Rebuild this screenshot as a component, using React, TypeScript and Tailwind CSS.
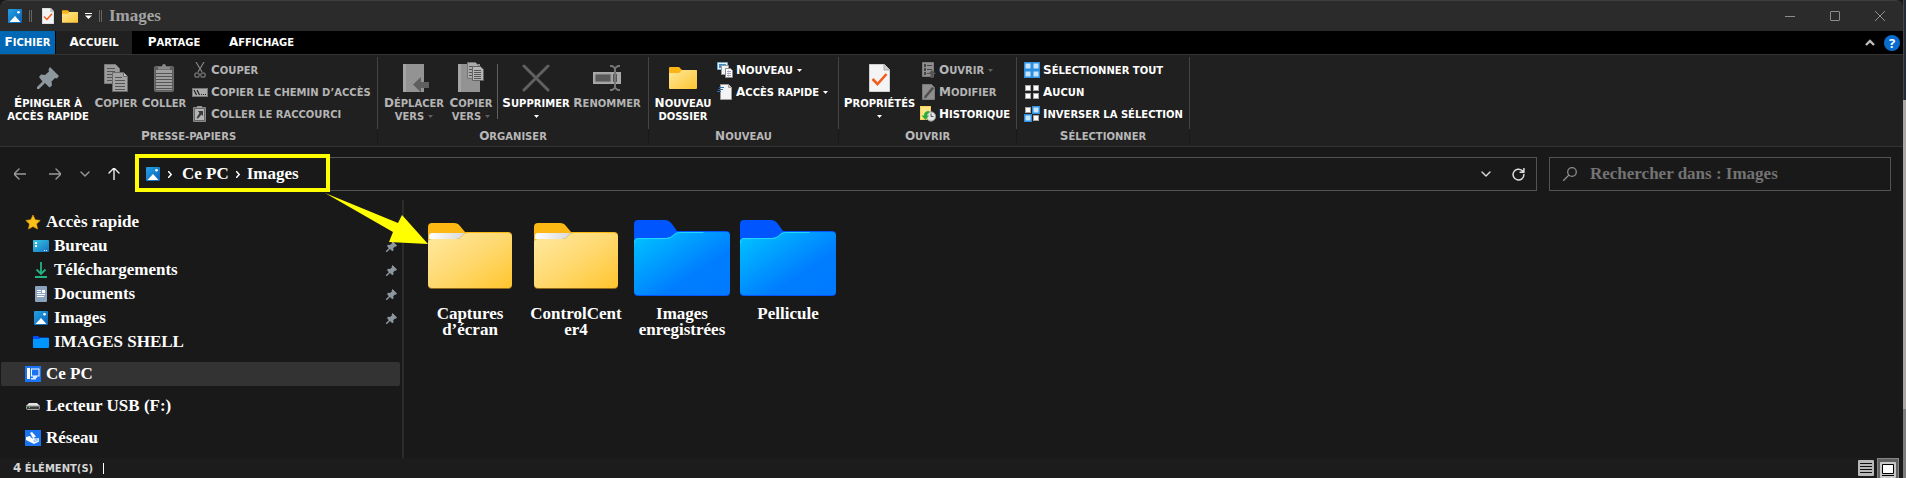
import React from 'react';

const serif = "font-['Liberation_Serif',serif] font-bold text-[17px]";
const caps = "font-['DejaVu_Sans',sans-serif] font-bold text-[10px] uppercase";
const initial = 'block first-letter:text-[12px]';

type IconProps = { className?: string };

const PictureIcon = ({ className = 'size-[14px]' }: IconProps) => (
    <svg viewBox="0 0 14 14" className={className}>
        <defs>
            <linearGradient id="pic" x1="0" y1="0" x2="1" y2="1">
                <stop offset="0" stopColor="#23a3e6" />
                <stop offset="1" stopColor="#0a5fb4" />
            </linearGradient>
        </defs>
        <rect width="14" height="14" rx="1" fill="url(#pic)" />
        <path d="M1.500 13 7 7l5.500 6z" fill="#fff" />
        <circle cx="10.500" cy="3.300" r="1.300" fill="#fff" />
    </svg>
);

const CheckPage = ({ className = 'h-4 w-3' }: IconProps) => (
    <svg viewBox="0 0 21 28" className={className}>
        <path d="M0 0h15l6 6v22H0z" fill="#f4f4f4" stroke="#a8a8a8" />
        <path d="M15 0v6h6" fill="#ccc" stroke="#a8a8a8" />
        <path d="m3.500 15 5 5 9-10" fill="none" stroke="#f25c1c" strokeWidth="2.600" />
    </svg>
);

const SmallFolder = ({ className = 'h-[13px] w-4' }: IconProps) => (
    <svg viewBox="0 0 28 22" className={className}>
        <defs>
            <linearGradient id="sf" x1="0" y1="0" x2="1" y2="1">
                <stop offset="0" stopColor="#ffe79a" />
                <stop offset="1" stopColor="#fdc632" />
            </linearGradient>
        </defs>
        <path d="M0 1q0-1 1-1h9l3 3h14q1 0 1 1v6H0z" fill="#fbb416" />
        <path d="M0 6h10l3-3h14q1 0 1 1v17q0 1-1 1H1q-1 0-1-1z" fill="url(#sf)" />
    </svg>
);

const PinIcon = ({ className = 'size-[11px]' }: IconProps) => (
    <svg viewBox="0 0 22 22" className={className}>
        <path
            d="m13 0 9 9-2 2.500-2-.5-3.500 3.500.5 4-2.500 2-4.500-4.500L2 22H0v-2l5.500-5.500L2 10l2-2.500 4 .5L12 4.500l-.5-2z"
            fill="#8d989e"
        />
    </svg>
);

const Lines = ({ x, y, w, n, gap = 3 }: { x: number; y: number; w: number; n: number; gap?: number }) => (
    <>
        {Array.from({ length: n }, (_, i) => (
            <rect key={i} x={x} y={y + i * gap} width={w} height="1" fill="#555" />
        ))}
    </>
);

const CopyIcon = () => (
    <svg viewBox="0 0 24 28" className="h-7 w-6">
        <path d="M.5.5h11l4 4v15H.5z" fill="#9b9b9b" stroke="#7c7c7c" />
        <Lines x={3} y={4} w={8} n={5} />
        <path d="M8.500 8.500h11l4 4v15h-15z" fill="#a3a3a3" stroke="#6a6a6a" />
        <path d="M19.500 8.500v4h4" fill="#c6c6c6" stroke="#6a6a6a" />
        <Lines x={11} y={13} w={7} n={1} />
        <Lines x={11} y={16} w={10} n={4} />
    </svg>
);

const PasteIcon = () => (
    <svg viewBox="0 0 20 28" className="h-7 w-5">
        <rect x=".5" y="2.500" width="19" height="25" rx="1" fill="#5d5d5d" stroke="#6c6c6c" />
        <path d="M2 6h16v20H2z" fill="#a0a0a0" />
        <Lines x={2} y={9} w={16} n={6} />
        <path d="M4 5.500V3h4q0-3 2-3t2 3h4v2.500z" fill="#898989" />
    </svg>
);

const MoveIcon = () => (
    <svg viewBox="0 0 26 28" className="ml-1 h-7 w-[26px]">
        <path d="M0 0h21v28H0z" fill="#939393" />
        <path d="M0 0h3v28H0z" fill="#a4a4a4" />
        <path d="m10 20.500 8-7.500v5h8v6h-8v4.500z" fill="#5f5f5f" />
    </svg>
);

const CopyToIcon = () => (
    <svg viewBox="0 0 26 30" className="mb-[2px] h-[30px] w-[26px]">
        <path d="M0 2h22v28H0z" fill="#939393" />
        <path d="M0 2h3v28H0z" fill="#a4a4a4" />
        <path d="M9.500.5h8l3 3v13h-11z" fill="#aaa" stroke="#747474" />
        <Lines x={11} y={4} w={6} n={4} />
        <path d="M14.500 4.500h8l3 3v11h-11z" fill="#b5b5b5" stroke="#646464" />
        <Lines x={16} y={8} w={7} n={5} gap={2} />
    </svg>
);

const DeleteIcon = () => (
    <svg viewBox="0 0 28 28" className="size-7">
        <path d="m2 2 24 24M26 2 2 26" stroke="#606060" strokeWidth="3" strokeLinecap="round" />
    </svg>
);

const RenameIcon = () => (
    <svg viewBox="0 0 28 26" className="h-[26px] w-7">
        <path d="M0 7h28v12H0z" fill="#a9a9a9" />
        <path d="M2 9h16v8H2z" fill="#5a5a5a" stroke="#9a9a9a" />
        <path d="M20 9h4v8h-4z" fill="#555" />
        <path d="M17 1h2l3 2 3-2h2M17 25h2l3-2 3 2h2M22 3v20" fill="none" stroke="#767676" strokeWidth="2" />
    </svg>
);

const CutIcon = () => (
    <svg viewBox="0 0 16 16" className="size-4">
        <path d="m4 0 6 10M12 0 6 10" stroke="#858585" strokeWidth="1.200" />
        <circle cx="5" cy="13" r="2.200" fill="none" stroke="#727272" strokeWidth="1.300" />
        <circle cx="11" cy="13" r="2.200" fill="none" stroke="#727272" strokeWidth="1.300" />
    </svg>
);

const PathIcon = () => (
    <svg viewBox="0 0 16 16" className="size-4">
        <rect x=".5" y="4.500" width="15" height="8" fill="#aaa" stroke="#777" />
        <path d="m2 6 2.500 5M5 6l2.500 5" stroke="#222" strokeWidth="1.200" />
        <path d="M9 10h1v1H9zM11 10h1v1h-1zM13 10h1v1h-1z" fill="#222" />
    </svg>
);

const PasteLinkIcon = () => (
    <svg viewBox="0 0 16 16" className="size-4">
        <path d="M1.500 1.500h12v14h-12z" fill="#666" stroke="#8a8a8a" />
        <path d="M3 3h9v11H3z" fill="#b5b5b5" />
        <path d="M5 0h5v2H5z" fill="#999" />
        <path d="M6 5h5v5L9.500 8.500 6 12.500 4.500 12 7.500 7z" fill="#3a3a3a" />
    </svg>
);

const NewItemIcon = () => (
    <svg viewBox="0 0 16 16" className="size-4">
        <path d="M.5.500h10v7H.5z" fill="#e8f3fb" stroke="#6fa7c9" />
        <path d="M2 2h7v4H2z" fill="#3f8fc4" />
        <path d="M4.500 3.500h7v9h-7z" fill="#f2f2f2" stroke="#9a9a9a" />
        <path d="M8.500 6.500h5l2 2v7h-7z" fill="#fff" stroke="#8a8a8a" />
        <path d="M10 9.500h4M10 11.500h4M10 13.500h4" stroke="#8ba6d4" />
        <path d="M11.500 8v7" stroke="#df9a9a" strokeWidth=".5" />
    </svg>
);

const EasyAccessIcon = () => (
    <svg viewBox="0 0 16 16" className="size-4">
        <path d="M3.500.500h8l3 3v12h-11z" fill="#f4f4f4" stroke="#9b9b9b" />
        <path d="M11.500.500v3h3" fill="#ccc" stroke="#9b9b9b" />
        <path d="M2 3.500h5M1 5.500h5M0 7.500h4" stroke="#2b6fb3" />
    </svg>
);

const OpenIcon = () => (
    <svg viewBox="0 0 16 16" className="size-4">
        <path d="M2.500.500h11v14h-11z" fill="#8f8f8f" stroke="#7b7b7b" />
        <path d="M4 2h2v3H4zM4 6h2v3H4zM4 10h2v3H4zM7 3h5v1H7zM7 7h5v1H7zM7 11h3v1H7z" fill="#444" />
        <path d="m12 8 4 4h-2.500v4h-3v-4H8z" fill="#565656" />
    </svg>
);

const EditIcon = () => (
    <svg viewBox="0 0 16 16" className="size-4">
        <path d="M2.500.500h9l3 3v12h-12z" fill="#8f8f8f" stroke="#7b7b7b" />
        <path d="M14.500 4 6 14l-2 .5.500-2.500L12 3z" fill="#505050" />
    </svg>
);

const HistoryIcon = () => (
    <svg viewBox="0 0 16 16" className="size-4">
        <path d="M0 0h11v14H0z" fill="#f7d458" />
        <path d="M1 1h9v12H1z" fill="#fbe38b" />
        <circle cx="11" cy="10.500" r="4.700" fill="#e3e3e3" stroke="#8b8b8b" />
        <path d="M11 7.500v3h2.500" stroke="#555" fill="none" />
        <path d="M9 5Q4 5 4 9.500H1.500L5.500 14l3.500-4.500H7q0-2 2-2.500z" fill="#2faa3d" />
    </svg>
);

const cells = [
    [0, 0],
    [8, 0],
    [0, 8],
    [8, 8]
];

const SelectIcon = ({ on }: { on: number[] }) => (
    <svg viewBox="0 0 16 16" className="size-4">
        {cells.map(([x, y], i) =>
            on.includes(i) ? (
                <g key={i}>
                    <rect x={x} y={y} width="8" height="8" fill="#2e8fe0" />
                    <rect x={x + 1.5} y={y + 1.5} width="5" height="5" fill="#c6e5fb" />
                </g>
            ) : (
                <rect key={i} x={x + 1.5} y={y + 1.5} width="5" height="5" fill="#fff" stroke="#a5a5a5" />
            )
        )}
    </svg>
);

const Caret = ({ className = '' }: IconProps) => (
    <svg viewBox="0 0 5 3" className={`h-[3px] w-[5px] shrink-0 fill-current ${className}`}>
        <path d="M0 0h5L2.500 3z" />
    </svg>
);

type LargeProps = {
    icon: React.ReactNode;
    label: string;
    second?: string;
    caret?: boolean;
    off?: boolean;
    width: string;
};

function LargeButton({ icon, label, second, caret, off, width }: LargeProps) {
    return (
        <button
            disabled={off}
            className={`flex shrink-0 flex-col items-center pt-[5px] leading-[13px] whitespace-nowrap ${caps} ${width} ${off ? 'text-[#b4b4b4]' : 'text-white'}`}
        >
            <span className="mb-[3px] flex h-8 items-center justify-center">{icon}</span>
            <span className={`h-[13px] ${initial}`}>{label}</span>
            <span className="flex h-[13px] items-center gap-1">
                {second}
                {caret && <Caret className={off ? 'text-[#606060]' : ''} />}
            </span>
        </button>
    );
}

function SmallButton({ icon, label, caret, off }: { icon: React.ReactNode; label: string; caret?: boolean; off?: boolean }) {
    return (
        <button
            disabled={off}
            className={`flex h-[22px] items-center gap-[3px] leading-[22px] whitespace-nowrap ${caps} ${off ? 'text-[#b4b4b4]' : 'text-white'}`}
        >
            {icon}
            <span className={initial}>{label}</span>
            {caret && <Caret className={off ? 'ml-px text-[#606060]' : 'ml-px'} />}
        </button>
    );
}

function Group({ title, width, children }: { title: string; width: string; children: React.ReactNode }) {
    return (
        <section className={`flex shrink-0 flex-col ${width}`}>
            <div className="flex h-[72px] border-r border-[#444] pl-[5px]">{children}</div>
            <div className={`h-[15px] border-r border-[#191919] text-center leading-[15px] text-[#b8b8b8] ${caps} ${initial}`}>{title}</div>
        </section>
    );
}

const Column = ({ className = 'pl-[5px]', children }: { className?: string; children: React.ReactNode }) => (
    <div className={`flex flex-col items-start pt-[2px] ${className}`}>{children}</div>
);

function Ribbon() {
    return (
        <div className="flex overflow-hidden border-y border-[#333] bg-[#202020] pt-[2px] pb-[2px]">
            <Group title="Presse-papiers" width="w-[378px]">
                <LargeButton icon={<PinIcon className="size-[22px]" />} label="Épingler à" second="Accès rapide" width="w-[86px]" />
                <LargeButton icon={<CopyIcon />} label="Copier" off width="w-[50px]" />
                <LargeButton icon={<PasteIcon />} label="Coller" off width="w-[46px]" />
                <Column>
                    <SmallButton icon={<CutIcon />} label="Couper" off />
                    <SmallButton icon={<PathIcon />} label="Copier le chemin d’accès" off />
                    <SmallButton icon={<PasteLinkIcon />} label="Coller le raccourci" off />
                </Column>
            </Group>
            <Group title="Organiser" width="w-[271px]">
                <LargeButton icon={<MoveIcon />} label="Déplacer" second="vers" caret off width="w-[62px]" />
                <LargeButton icon={<CopyToIcon />} label="Copier" second="vers" caret off width="w-[52px]" />
                <div className="mt-[7px] h-[55px] w-px bg-[#606060]" />
                <LargeButton icon={<DeleteIcon />} label="Supprimer" caret width="w-[76px]" />
                <LargeButton icon={<RenameIcon />} label="Renommer" off width="w-[66px]" />
            </Group>
            <Group title="Nouveau" width="w-[190px]">
                <LargeButton icon={<SmallFolder className="h-[22px] w-7" />} label="Nouveau" second="dossier" width="w-[58px]" />
                <Column>
                    <SmallButton icon={<NewItemIcon />} label="Nouveau" caret />
                    <SmallButton icon={<EasyAccessIcon />} label="Accès rapide" caret />
                </Column>
            </Group>
            <Group title="Ouvrir" width="w-[178px]">
                <LargeButton icon={<CheckPage className="h-7 w-[21px]" />} label="Propriétés" caret width="w-[71px]" />
                <Column>
                    <SmallButton icon={<OpenIcon />} label="Ouvrir" caret off />
                    <SmallButton icon={<EditIcon />} label="Modifier" off />
                    <SmallButton icon={<HistoryIcon />} label="Historique" />
                </Column>
            </Group>
            <Group title="Sélectionner" width="w-[173px]">
                <Column className="pl-[2px]">
                    <SmallButton icon={<SelectIcon on={[0, 1, 2, 3]} />} label="Sélectionner tout" />
                    <SmallButton icon={<SelectIcon on={[]} />} label="Aucun" />
                    <SmallButton icon={<SelectIcon on={[1, 2]} />} label="Inverser la sélection" />
                </Column>
            </Group>
        </div>
    );
}

function TitleBar() {
    return (
        <header className="flex h-[31px] items-center rounded-t-lg border-t border-[#3d3d3d] bg-[#2b2b2b] pl-2">
            <PictureIcon />
            <span className="ml-[7px] h-3 w-[3px] border-x border-[#666]" />
            <button aria-label="Propriétés" className="ml-[10px]"><CheckPage /></button>
            <button aria-label="Nouveau dossier" className="ml-2"><SmallFolder /></button>
            <button aria-label="Personnaliser" className="ml-[7px]">
                <svg viewBox="0 0 7 6" className="h-[6px] w-[7px]" fill="#fff">
                    <path d="M0 0h7v1H0zM0 2.500h7L3.500 6z" />
                </svg>
            </button>
            <span className="ml-[7px] h-3 w-[3px] border-x border-[#666]" />
            <h1 className={`ml-[7px] leading-5 text-[#a3a3a3] ${serif}`}>Images</h1>
            <div className="ml-auto flex">
                <button aria-label="Réduire" className="flex h-7 w-[45px] items-center justify-center">
                    <span className="h-px w-[10px] bg-[#8c8c8c]" />
                </button>
                <button aria-label="Agrandir" className="flex h-7 w-[45px] items-center justify-center">
                    <span className="size-[10px] rounded-[1px] border border-[#8c8c8c]" />
                </button>
                <button aria-label="Fermer" className="flex h-7 w-[46px] items-center justify-center">
                    <svg viewBox="0 0 10 10" className="size-[10px]" stroke="#8c8c8c"><path d="m0 0 10 10M10 0 0 10" /></svg>
                </button>
            </div>
        </header>
    );
}

function Tabs() {
    return (
        <nav className="flex h-[23px] items-stretch bg-black leading-[23px] text-white">
            <button className={`w-[55px] bg-[#0067b4] ${caps}`}><span className={initial}>Fichier</span></button>
            <button className={`ml-px w-[76px] bg-[#202020] ${caps}`}><span className={initial}>Accueil</span></button>
            <button className={`w-[84px] ${caps}`}><span className={initial}>Partage</span></button>
            <button className={`w-[91px] ${caps}`}><span className={initial}>Affichage</span></button>
            <div className="ml-auto flex items-center gap-[9px] pr-[3px]">
                <button aria-label="Réduire le ruban">
                    <svg viewBox="0 0 10 7" className="h-[7px] w-[10px]" fill="none" stroke="#bdbdbd" strokeWidth="2.400"><path d="m1 6 4-4 4 4" /></svg>
                </button>
                <button aria-label="Aide" className="flex size-4 items-center justify-center rounded-full bg-[#0a6cce] font-['Open_Sans',sans-serif] text-[13px] leading-4 font-bold">
                    ?
                </button>
            </div>
        </nav>
    );
}

const Arrow = ({ d, color, className = 'size-3' }: { d: string; color: string; className?: string }) => (
    <svg viewBox="0 0 12 12" className={className} fill="none" stroke={color} strokeWidth="1.400" strokeLinecap="round" strokeLinejoin="round">
        <path d={d} />
    </svg>
);

const Crumb = () => (
    <svg viewBox="0 0 4 7" className="h-[7px] w-1" fill="none" stroke="#fff" strokeWidth="1.500"><path d="m0 0 3.200 3.500L0 7" /></svg>
);

function AddressRow() {
    return (
        <div className="flex items-center pt-[10px] pr-3 pb-[9px] pl-[14px]">
            <button aria-label="Précédent"><Arrow d="M12 6H0M5 1 0 6l5 5" color="#999" /></button>
            <button aria-label="Suivant" className="ml-[23px]"><Arrow d="M0 6h12M7 1l5 5-5 5" color="#999" /></button>
            <button aria-label="Emplacements récents" className="ml-[18px]"><Arrow d="m2 4 4 4 4-4" color="#999" /></button>
            <button aria-label="Dossier parent" className="ml-[17px]"><Arrow d="M6 12V0M1 5l5-5 5 5" color="#eee" /></button>
            <div className="relative ml-[15px] flex h-[34px] flex-1 items-center border border-[#535353] pl-[10px]">
                <PictureIcon />
                <span className="ml-2"><Crumb /></span>
                <button className={`ml-[10px] text-white ${serif}`}>Ce PC</button>
                <span className="ml-[7px]"><Crumb /></span>
                <button className={`ml-[7px] text-white ${serif}`}>Images</button>
                <button aria-label="Adresses précédentes" className="ml-auto"><Arrow d="m2 4 4 4 4-4" color="#ddd" /></button>
                <button aria-label="Actualiser" className="mr-[11px] ml-5">
                    <Arrow d="M11 6a5 5 0 1 1-1.600-3.600L11 4M11 .500V4H7.500" color="#ddd" className="size-[13px]" />
                </button>
                <div className="pointer-events-none absolute -top-1 -left-px h-[38px] w-[195px] border-4 border-[#ffff00]" />
                <svg viewBox="0 0 103 52" className="pointer-events-none absolute top-[35px] left-[189px] z-10 h-[52px] w-[103px]">
                    <path d="m0 0 73 30 4-8 26 29-39-2 4-10z" fill="#ffff00" />
                </svg>
            </div>
            <label className="ml-3 flex h-[34px] w-[342px] items-center border border-[#535353] pl-[13px]">
                <svg viewBox="0 0 14 14" className="size-[14px]" fill="none" stroke="#8d8d8d" strokeWidth="1.300">
                    <circle cx="9" cy="5" r="4.300" />
                    <path d="m6 8-6 6" />
                </svg>
                <input
                    type="text"
                    aria-label="Rechercher"
                    placeholder="Rechercher dans : Images"
                    className={`ml-[13px] min-w-0 flex-1 bg-transparent outline-none placeholder:text-[#737373] ${serif}`}
                />
            </label>
        </div>
    );
}

const StarIcon = () => (
    <svg viewBox="0 0 16 16" className="size-4">
        <path d="m8 1 2.200 4.800 5 .6-3.700 3.500 1 5.100L8 12.500 3.500 15l1-5.100L.8 6.400l5-.6z" fill="#fdc019" stroke="#f0a30a" strokeWidth=".6" />
    </svg>
);

const DesktopIcon = () => (
    <svg viewBox="0 0 16 16" className="size-4">
        <defs>
            <linearGradient id="desk" x1="0" y1="0" x2="1" y2="1">
                <stop offset="0" stopColor="#35c8e2" />
                <stop offset="1" stopColor="#1471c4" />
            </linearGradient>
        </defs>
        <rect y="2" width="16" height="12" rx="1" fill="url(#desk)" />
        <path d="M2 4h2v2H2zM2 7h2v2H2zM11 12h1v1h-1zM13 12h1v1h-1z" fill="#fff" />
    </svg>
);

const DownloadIcon = () => (
    <svg viewBox="0 0 16 16" className="size-4" fill="none" stroke="#22b384" strokeWidth="1.800">
        <path d="M8 0v12M3.500 7.500 8 12l4.500-4.500M2 15h12" />
    </svg>
);

const DocumentIcon = () => (
    <svg viewBox="0 0 16 16" className="size-4">
        <rect x="2" width="12" height="16" rx="1" fill="#8ba2bc" />
        <path d="M4 4h4v1H4zM4 6h4v1H4zM9 4h3v3H9zM4 8h8v1H4zM4 10h7v1H4z" fill="#fff" />
    </svg>
);

const BlueFolderIcon = () => (
    <svg viewBox="0 0 16 16" className="size-4">
        <path d="M0 3q0-1 1-1h4l1.500 1.500H15q1 0 1 1V7H0z" fill="#0050ff" />
        <path d="M0 5h6l1.500-1H15q1 0 1 1v8q0 1-1 1H1q-1 0-1-1z" fill="#0096ff" />
    </svg>
);

const ComputerIcon = () => (
    <svg viewBox="0 0 16 16" className="size-4">
        <path d="M0 0h16v16H0z" fill="#1a73f0" />
        <path d="M2 2h3v11H2z" fill="#fff" />
        <rect x="6.500" y="3" width="7.500" height="7" fill="#1a73f0" stroke="#fff" />
        <path d="M8 10h4v2H8zM6 12h5v1.500H6z" fill="#d8e8ff" />
    </svg>
);

const DriveIcon = () => (
    <svg viewBox="0 0 16 16" className="size-4">
        <path d="M4 5h8l3 3H1z" fill="#e3e3e3" />
        <rect x="1.500" y="8" width="13" height="3.500" rx="1" fill="#3c3c3c" stroke="#a5a5a5" />
        <path d="M4 9h1v1H4z" fill="#47e05a" />
    </svg>
);

const NetworkIcon = () => (
    <svg viewBox="0 0 16 16" className="size-4">
        <path d="M0 0h16v16H0z" fill="#1a73f0" />
        <path d="m1 7 4-1 5 2.500L14 8v3.500L9 14l-5-2.500L1 10z" fill="#fff" />
        <path d="m5 3 2-1 4 4.500L8 8z" fill="#fff" />
        <path d="m8.500 10.500 5-1.800M8.500 12l5-2" stroke="#6ea6f7" strokeWidth=".8" />
        <path d="m5 6.500 3 2" stroke="#1a73f0" strokeWidth=".8" />
    </svg>
);

const places = [
    { icon: StarIcon, label: 'Accès rapide' },
    { icon: DesktopIcon, label: 'Bureau', nested: true, pinned: true },
    { icon: DownloadIcon, label: 'Téléchargements', nested: true, pinned: true },
    { icon: DocumentIcon, label: 'Documents', nested: true, pinned: true },
    { icon: () => <PictureIcon className="mx-px size-[14px]" />, label: 'Images', nested: true, pinned: true },
    { icon: BlueFolderIcon, label: 'IMAGES SHELL', nested: true },
    { icon: ComputerIcon, label: 'Ce PC', gap: true, active: true },
    { icon: DriveIcon, label: 'Lecteur USB (F:)', gap: true },
    { icon: NetworkIcon, label: 'Réseau', gap: true }
];

function Sidebar() {
    return (
        <nav className="w-[404px] shrink-0 border-r-2 border-[#2b2b2b] pt-[10px] pr-[2px] pb-2 pl-px">
            {places.map((place) => (
                <button
                    key={place.label}
                    className={`flex h-6 w-full items-center gap-[5px] pr-[3px] text-white ${serif} ${place.nested ? 'pl-8' : 'pl-6'} ${place.gap ? 'mt-2' : ''} ${place.active ? 'rounded-[2px] bg-[#333]' : ''}`}
                >
                    <place.icon />
                    <span>{place.label}</span>
                    {place.pinned && <PinIcon className="ml-auto size-[11px]" />}
                </button>
            ))}
        </nav>
    );
}

const YellowFolder = () => (
    <svg viewBox="0 0 84 70" className="h-[70px] w-[84px]">
        <defs>
            <linearGradient id="yf" x1="0" y1="0" x2="1" y2="1">
                <stop offset="0" stopColor="#ffe9a2" />
                <stop offset=".5" stopColor="#ffd970" />
                <stop offset="1" stopColor="#ffc52e" />
            </linearGradient>
            <linearGradient id="paper" x1="0" y1="0" x2="1" y2="0">
                <stop offset="0" stopColor="#fff" />
                <stop offset="1" stopColor="#d8d8d8" />
            </linearGradient>
        </defs>
        <path d="M0 4q0-4 4-4h22q4 0 6 3l5 6h43q4 0 4 4v10H0z" fill="#fdb813" />
        <path d="M1 13q0-3 3-3h33l-4 6H1z" fill="url(#paper)" />
        <path d="M0 19q0-3 4-3h24q4 0 6-3l2-2q1-1 4-1h40q4 0 4 4v48q0 4-4 4H4q-4 0-4-4z" fill="#8f6a1b" />
        <path d="M0 19q0-3 4-3h24q4 0 6-3l2-2q1-1 4-1h40q4 0 4 4v47q0 4-4 4H4q-4 0-4-4z" fill="url(#yf)" />
    </svg>
);

const BlueFolder = () => (
    <svg viewBox="0 0 96 76" className="h-[76px] w-24">
        <defs>
            <linearGradient id="bf" x1="0" y1="0" x2="1" y2="1">
                <stop offset="0" stopColor="#00c6ff" />
                <stop offset=".65" stopColor="#007dff" />
                <stop offset="1" stopColor="#007aff" />
            </linearGradient>
        </defs>
        <path d="M0 4q0-4 4-4h27q4 0 7 4l5 7h49q4 0 4 4v57q0 4-4 4H4q-4 0-4-4z" fill="#0055ff" />
        <path d="M0 22q0-4 4-4h28q4 0 7-3l2-2q2-1 5-1h46q4 0 4 4v55q0 4-4 4H4q-4 0-4-4z" fill="url(#bf)" />
        <path d="M.5 23q0-4.500 4-4.500h28q4 0 7-3 2.500-3 6-3h24" fill="none" stroke="#20d8ff" />
    </svg>
);

const folders = [
    { art: YellowFolder, lines: ['Captures', 'd’écran'] },
    { art: YellowFolder, lines: ['ControlCent', 'er4'] },
    { art: BlueFolder, lines: ['Images', 'enregistrées'] },
    { art: BlueFolder, lines: ['Pellicule'] }
];

function StatusBar() {
    return (
        <footer className={`flex h-5 items-center bg-[#1c1c1c] pr-1 pl-[13px] text-[#d6d6d6] ${caps}`}>
            <span className={initial}>4 élément(s)</span>
            <span className="ml-[10px] h-[11px] w-px bg-white" />
            <button aria-label="Détails" className="ml-auto">
                <svg viewBox="0 0 16 16" className="size-4">
                    <rect width="16" height="16" rx="1" fill="#b9b9b9" />
                    <path d="M2 3.500h12M2 6.500h12M2 9.500h12M2 12.500h12" stroke="#111" />
                </svg>
            </button>
            <button aria-label="Grandes icônes" className="ml-[3px] flex h-5 w-[22px] items-end justify-center border border-b-0 border-[#858585] bg-[#626262]">
                <svg viewBox="0 0 16 16" className="size-4">
                    <rect width="16" height="16" rx="1" fill="#c9c9c9" />
                    <path d="M2.500 2.500h11v9h-11z" fill="#fff" stroke="#000" />
                    <path d="M2 13.500h12" stroke="#000" />
                </svg>
            </button>
        </footer>
    );
}

export default function App() {
    return (
        <div className="flex min-h-screen bg-[#20242b]">
            <div className="flex min-w-0 flex-1 flex-col bg-[#191919]">
                <TitleBar />
                <Tabs />
                <Ribbon />
                <AddressRow />
                <main className="flex flex-1">
                    <Sidebar />
                    <div className="flex items-start pt-5 pl-[13px]">
                        {folders.map((folder) => (
                            <button key={folder.lines[0]} className="flex w-[106px] flex-col items-center text-white">
                                <span className="flex h-[76px] items-center"><folder.art /></span>
                                <span className={`mt-[10px] leading-4 ${serif}`}>
                                    {folder.lines.map((line) => (
                                        <span key={line} className="block">{line}</span>
                                    ))}
                                </span>
                            </button>
                        ))}
                    </div>
                </main>
                <StatusBar />
            </div>
            <div className="flex w-[3px] flex-col">
                <div className="h-[100px] border-l border-[#444] bg-[#252b35]" />
                <div className="flex-1 bg-[#aaa6a4]" />
                <div className="h-[69px] bg-[#7d7d7d]" />
            </div>
        </div>
    );
}
